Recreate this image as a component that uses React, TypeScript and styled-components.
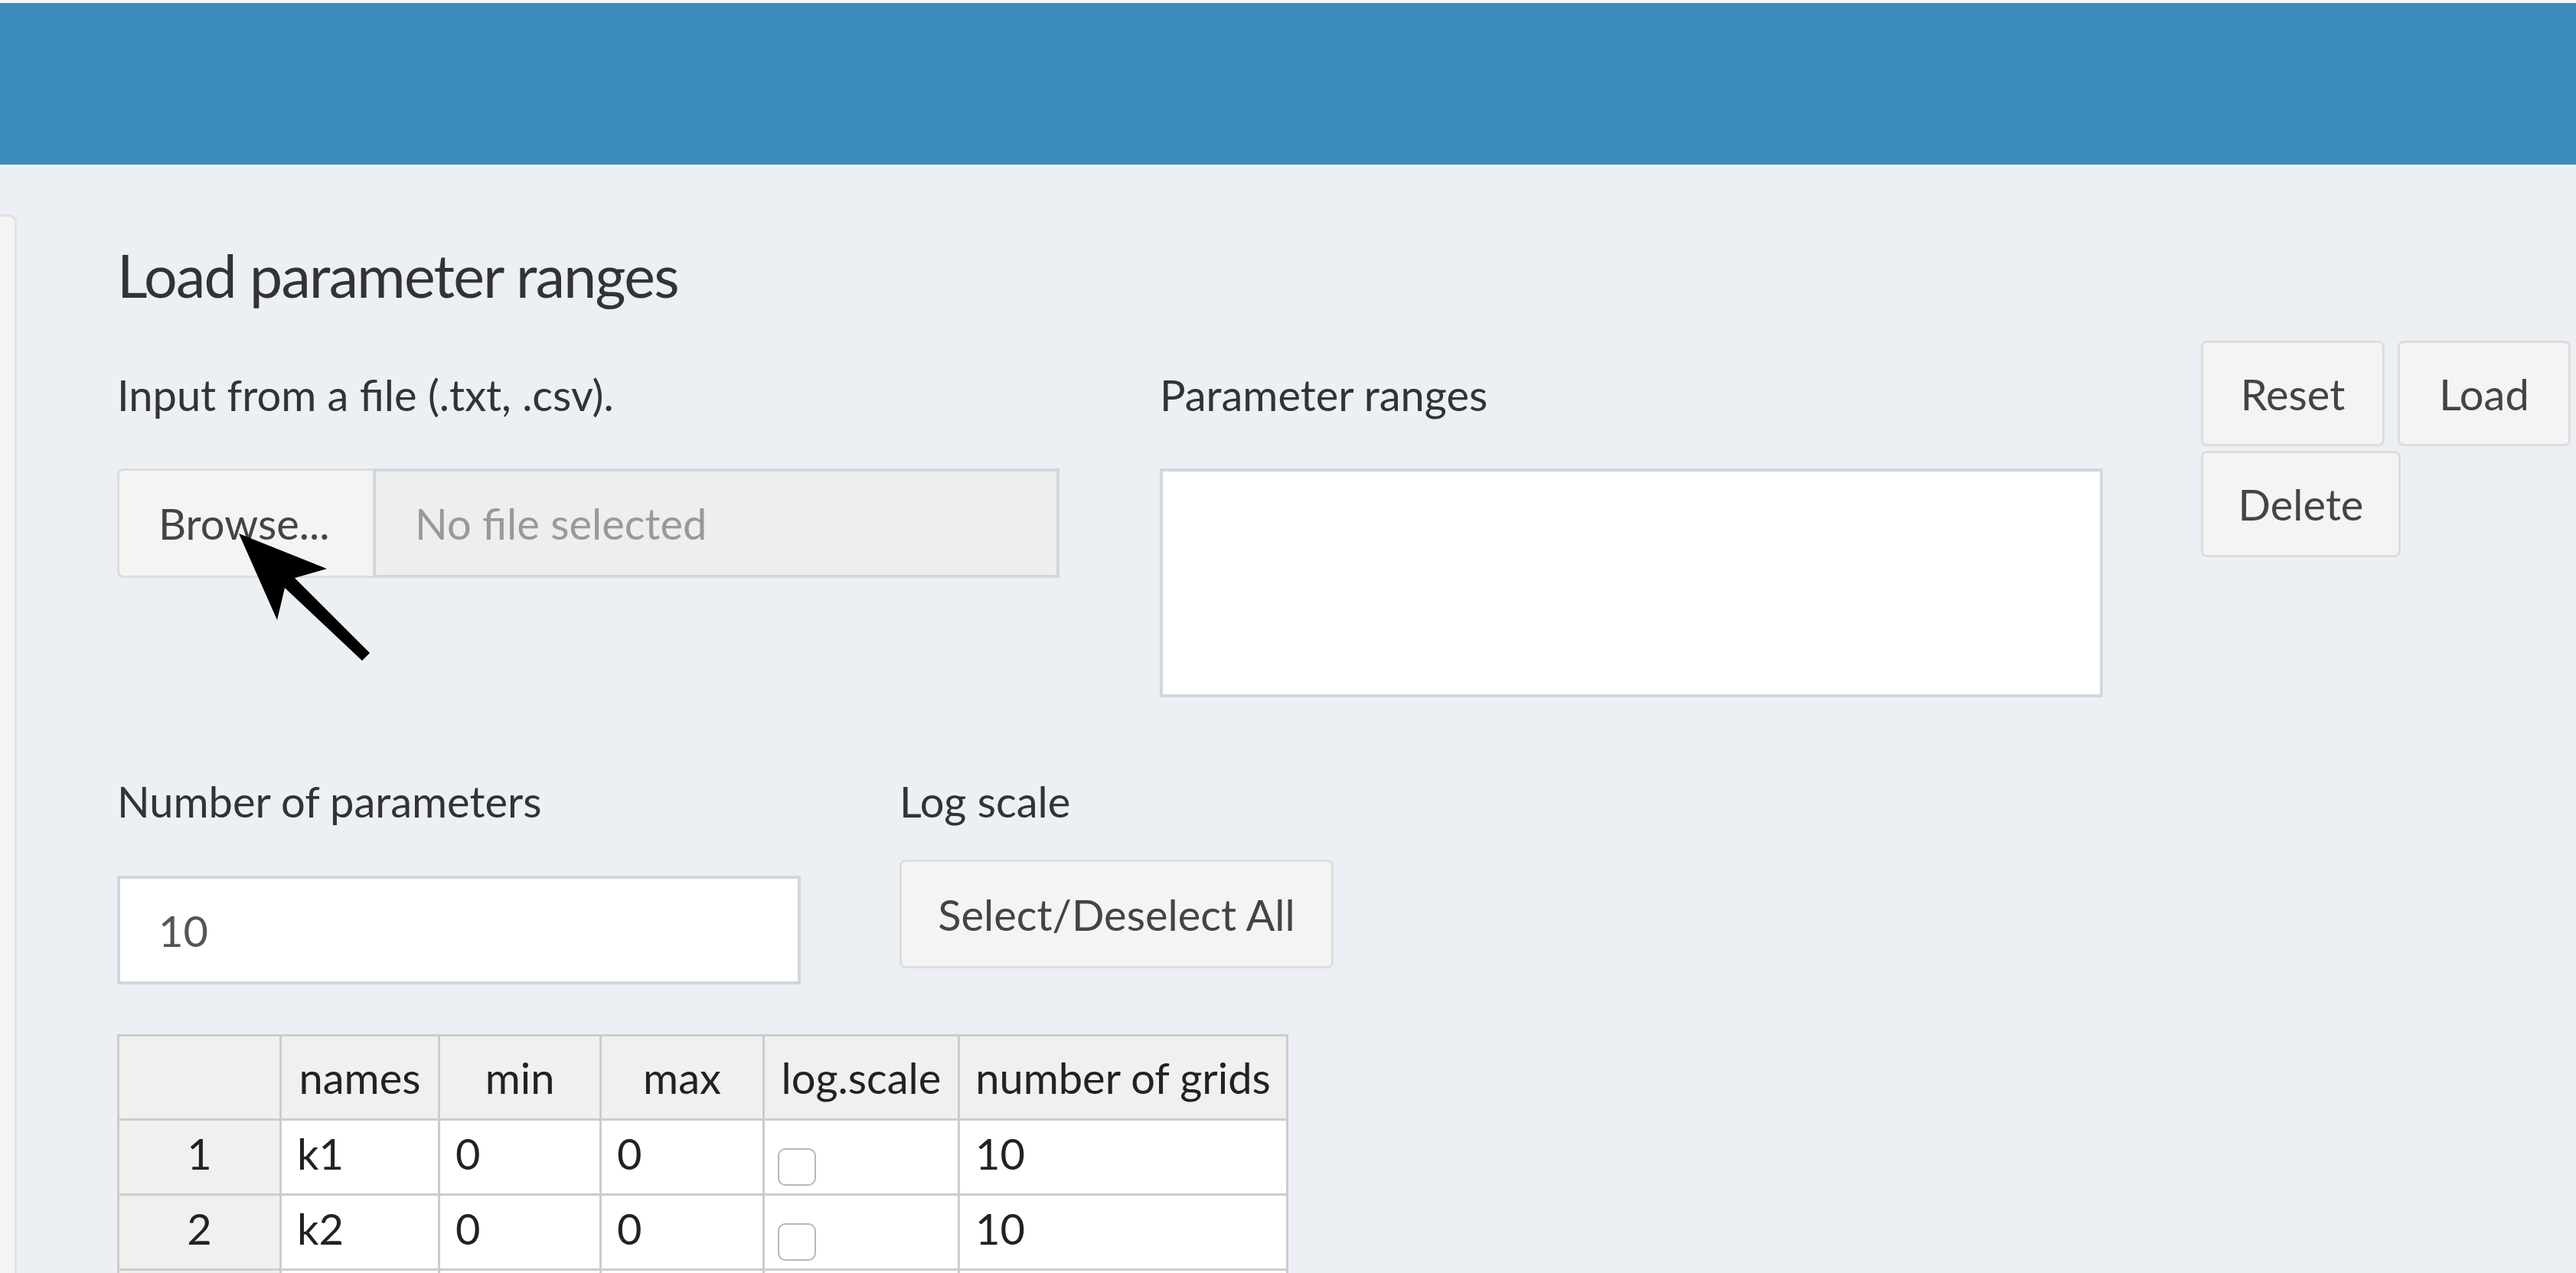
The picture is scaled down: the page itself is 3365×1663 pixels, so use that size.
import React from 'react';
import styled, { createGlobalStyle } from 'styled-components';

const GlobalStyle = createGlobalStyle`
  html, body {
    margin: 0;
    padding: 0;
    overflow: hidden;
    background: #ecf0f5;
  }
  body {
    font-family: Lato, "Noto Sans", sans-serif;
    color: #333;
  }
`;

const Page = styled.div`
  position: relative;
  display: flex;
  flex-direction: column;
  width: 3365px;
  height: 1663px;
  overflow: hidden;
`;

const TopStrip = styled.div`
  height: 4px;
  flex-shrink: 0;
  background: #f4f6f8;
`;

const Header = styled.header`
  height: 211px;
  flex-shrink: 0;
  background: #3c8dbc;
`;

const Body = styled.div`
  display: flex;
  flex: 1;
  min-height: 0;
`;

const SideStub = styled.aside`
  width: 19px;
  flex-shrink: 0;
  margin-top: 65px;
  background: #f4f4f4;
  border: 3px solid #e2e2e2;
  border-left: none;
  border-bottom: none;
  border-top-right-radius: 10px;
`;

const Main = styled.main`
  flex: 1;
  padding: 97px 0 0 131px;
`;

const Title = styled.h3`
  margin: 0;
  font-size: 77px;
  line-height: 94px;
  font-weight: 400;
  letter-spacing: -1.7px;
  color: #333;
`;

const Row = styled.div<{ $top: number }>`
  display: flex;
  align-items: flex-start;
  margin-top: ${({ $top }) => $top}px;
`;

const Column = styled.div<{ $width?: number; $left?: number; $pad?: number }>`
  display: flex;
  flex-direction: column;
  flex-shrink: 0;
  width: ${({ $width }) => ($width ? `${$width}px` : 'auto')};
  margin-left: ${({ $left = 0 }) => $left}px;
  padding-top: ${({ $pad = 0 }) => $pad}px;
`;

const Label = styled.label`
  display: block;
  font-size: 56px;
  line-height: 67px;
  color: #333;
`;

const FileGroup = styled.div`
  display: flex;
  height: 143px;
  margin-top: 63px;
`;

const BrowseButton = styled.span`
  display: flex;
  align-items: center;
  box-sizing: border-box;
  width: 334px;
  padding-left: 51px;
  background: #f4f4f4;
  border: 3px solid #dddddd;
  border-right: none;
  border-radius: 8px 0 0 8px;
  font-size: 56px;
  color: #444;
`;

const FileName = styled.span`
  display: flex;
  align-items: center;
  flex: 1;
  box-sizing: border-box;
  padding-left: 51px;
  background: #eeeeee;
  border: 4px solid #d2d6de;
  font-size: 56px;
  color: #999;
`;

const TextArea = styled.textarea`
  display: block;
  box-sizing: border-box;
  width: 1232px;
  height: 299px;
  margin: 63px 0 0;
  background: #fff;
  border: 4px solid #d2d6de;
  border-radius: 0;
  resize: none;
  font-family: inherit;
  font-size: 56px;
  outline: none;
`;

const ButtonGroup = styled.div`
  display: flex;
  flex-wrap: wrap;
  gap: 6px 17px;
  width: 490px;
  margin-left: 128px;
`;

const ActionButton = styled.button<{ $width: number; $height?: number; $top?: number }>`
  box-sizing: border-box;
  width: ${({ $width }) => $width}px;
  height: ${({ $height = 138 }) => $height}px;
  margin-top: ${({ $top = 0 }) => $top}px;
  padding: 0;
  background: #f4f4f4;
  border: 3px solid #dddddd;
  border-radius: 8px;
  font-family: inherit;
  font-size: 56px;
  color: #444;
  cursor: pointer;
`;

const NumberInput = styled.div`
  display: flex;
  align-items: center;
  box-sizing: border-box;
  height: 142px;
  margin-top: 64px;
  padding-left: 50px;
  background: #fff;
  border: 4px solid #d2d6de;
  font-size: 56px;
  color: #555;
`;

const Table = styled.table`
  margin-top: 65px;
  width: 1527px;
  border-collapse: collapse;
  table-layout: fixed;
  font-size: 56px;
  color: #222;
`;

const HeadCell = styled.th`
  height: 107px;
  padding: 0 6px;
  background: #f0f0f0;
  border: 3px solid #cccccc;
  font-weight: 400;
  text-align: center;
  white-space: nowrap;
  overflow: hidden;
`;

const Cell = styled.td<{ $index?: boolean }>`
  height: 84px;
  padding: 0 0 10px ${({ $index }) => ($index ? 0 : 20)}px;
  background: ${({ $index }) => ($index ? '#f0f0f0' : '#fff')};
  border: 3px solid #cccccc;
  text-align: ${({ $index }) => ($index ? 'center' : 'left')};
  white-space: nowrap;
`;

const CheckBox = styled.span`
  display: block;
  box-sizing: border-box;
  width: 50px;
  height: 49px;
  margin: 36px 0 0 -3px;
  background: #fff;
  border: 2px solid #b8b8b8;
  border-radius: 10px;
`;

const Cursor = styled.svg`
  position: absolute;
  left: 300px;
  top: 690px;
  pointer-events: none;
`;

const columns = [212, 207, 211, 213, 255, 429];
const headers = ['', 'names', 'min', 'max', 'log.scale', 'number of grids'];

// only the rows that fit in the window are drawn; the third one starts at the bottom edge
const rows = [
  { id: 1, name: 'k1', min: 0, max: 0, grids: 10 },
  { id: 2, name: 'k2', min: 0, max: 0, grids: 10 },
];

export default function App() {
  return (
    <Page>
      <GlobalStyle />
      <TopStrip />
      <Header />
      <Body>
        <SideStub />
        <Main>
          <Title>Load parameter ranges</Title>

          <Row $top={39}>
            <Column $width={1231} $pad={37}>
              <Label>Input from a file (.txt, .csv).</Label>
              <FileGroup>
                <BrowseButton>Browse...</BrowseButton>
                <FileName>No file selected</FileName>
              </FileGroup>
            </Column>
            <Column $left={131} $pad={37}>
              <Label>Parameter ranges</Label>
              <TextArea />
            </Column>
            <ButtonGroup>
              <ActionButton $width={240}>Reset</ActionButton>
              <ActionButton $width={226}>Load</ActionButton>
              <ActionButton $width={261} $height={139}>Delete</ActionButton>
            </ButtonGroup>
          </Row>

          <Row $top={102}>
            <Column $width={893}>
              <Label>Number of parameters</Label>
              <NumberInput>10</NumberInput>
            </Column>
            <Column $left={129}>
              <Label>Log scale</Label>
              <ActionButton $width={567} $height={142} $top={43}>
                Select/Deselect All
              </ActionButton>
            </Column>
          </Row>

          <Table>
            <colgroup>
              {columns.map((w, i) => (
                <col key={i} style={{ width: w }} />
              ))}
            </colgroup>
            <thead>
              <tr>
                {headers.map((h, i) => (
                  <HeadCell key={i}>{h}</HeadCell>
                ))}
              </tr>
            </thead>
            <tbody>
              {rows.map((r) => (
                <tr key={r.id}>
                  <Cell $index>{r.id}</Cell>
                  <Cell>{r.name}</Cell>
                  <Cell>{r.min}</Cell>
                  <Cell>{r.max}</Cell>
                  <Cell>
                    <CheckBox />
                  </Cell>
                  <Cell>{r.grids}</Cell>
                </tr>
              ))}
              <tr>
                {columns.map((_, i) => (
                  <Cell key={i} $index={i === 0} />
                ))}
              </tr>
            </tbody>
          </Table>
        </Main>
      </Body>

      <Cursor width="200" height="180" viewBox="0 0 200 180">
        <polygon
          points="12,7 127,53 85,65 183,163 173,173 72,78 62,120"
          fill="#000"
        />
      </Cursor>
    </Page>
  );
}
